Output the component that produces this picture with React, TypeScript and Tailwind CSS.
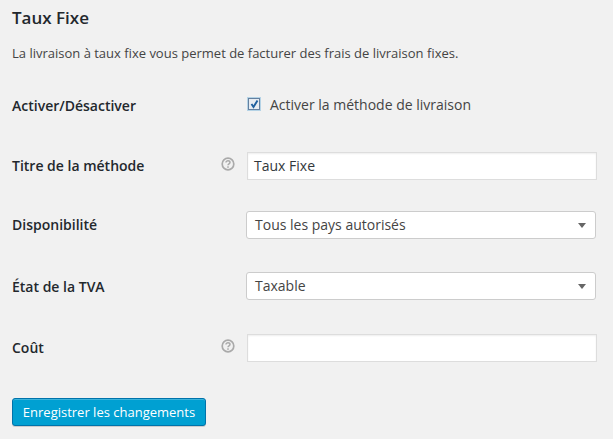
import React from "react";

function Help() {
  return (
    <svg width="14" height="14" viewBox="0 0 14 14" className="block">
      <circle cx="7" cy="7" r="5.8" fill="none" stroke="#aaaaaa" strokeWidth="1.7" />
      <path d="M5 5.6c0-1.1.9-1.8 2-1.8s2 .7 2 1.7c0 1.4-2 1.4-2 2.7" fill="none" stroke="#aaaaaa" strokeWidth="1.5" />
      <rect x="6.2" y="9.3" width="1.6" height="1.5" fill="#aaaaaa" />
    </svg>
  );
}

function Row({ label, help, className, labelClass, children }: { label: string; help?: boolean; className: string; labelClass?: string; children: React.ReactNode }) {
  return (
    <div className={`flex items-center ${className}`}>
      <div className={`w-[208px] text-[14px] font-semibold text-[#23282d] ${labelClass ?? "pb-[2px]"}`}>{label}</div>
      <div className="w-[27px] flex pl-[1px] pb-[4px]">{help && <Help />}</div>
      {children}
    </div>
  );
}

function Select({ value }: { value: string }) {
  return (
    <div className="ml-[-1px] w-[350px] h-[28px] bg-white border border-[#cccccc] rounded-[3px] flex items-center justify-between pl-[8px] pr-[9px] text-[14px] text-[#444444]">
      <span className="pb-[2px]">{value}</span>
      <span className="w-0 h-0 border-x-[4px] border-x-transparent border-t-[5px] border-t-[#666666]" />
    </div>
  );
}

function TextInput({ value }: { value?: string }) {
  return (
    <div className="w-[350px] h-[28px] bg-white border border-[#dddddd] flex items-center pl-[6px] pb-[2px] text-[14px] text-[#32373c] shadow-[inset_0_1px_2px_rgba(0,0,0,0.07)]">
      {value}
    </div>
  );
}

export default function App() {
  return (
    <div className="w-[613px] h-[439px] overflow-hidden bg-[#f1f1f1] px-[12px] font-['Open_Sans',sans-serif]">
      <h2 className="pt-[7px] text-[17px] leading-[22px] font-semibold text-[#23282d]">Taux Fixe</h2>
      <p className="mt-[13px] text-[13px] leading-[22px] text-[#444444]">
        La livraison à taux fixe vous permet de facturer des frais de livraison fixes.
      </p>
      <Row label="Activer/Désactiver" className="mt-[28px] h-[28px]">
        <div className="flex items-center gap-[10px] pb-[4px] text-[14px] text-[#444444]">
          <span className="w-[12px] h-[12px] ml-[1px] bg-[#e6ebf1] border border-[#64809f] shadow-[0_0_0_1px_#b5d3e6] flex items-center justify-center">
            <svg width="9" height="10" viewBox="0 0 9 10">
              <path d="M1.5 5l2 3L7.5 1.5" fill="none" stroke="#1e5f9e" strokeWidth="1.9" />
            </svg>
          </span>
          <span>Activer la méthode de livraison</span>
        </div>
      </Row>
      <Row label="Titre de la méthode" help className="mt-[32px] h-[28px]">
        <TextInput value="Taux Fixe" />
      </Row>
      <Row label="Disponibilité" className="mt-[31px] h-[28px]">
        <Select value="Tous les pays autorisés" />
      </Row>
      <Row label="État de la TVA" labelClass="pb-0" className="mt-[33px] h-[28px]">
        <Select value="Taxable" />
      </Row>
      <Row label="Coût" help className="mt-[34px] h-[28px]">
        <TextInput />
      </Row>
      <button className="mt-[36px] w-[194px] h-[28px] pt-[1px] bg-[#00a0d2] border border-[#0073aa] rounded-[3px] text-white text-[13px] shadow-[inset_0_1px_0_rgba(120,200,230,0.5),0_1px_0_rgba(0,0,0,0.15)]">
        Enregistrer les changements
      </button>
    </div>
  );
}
